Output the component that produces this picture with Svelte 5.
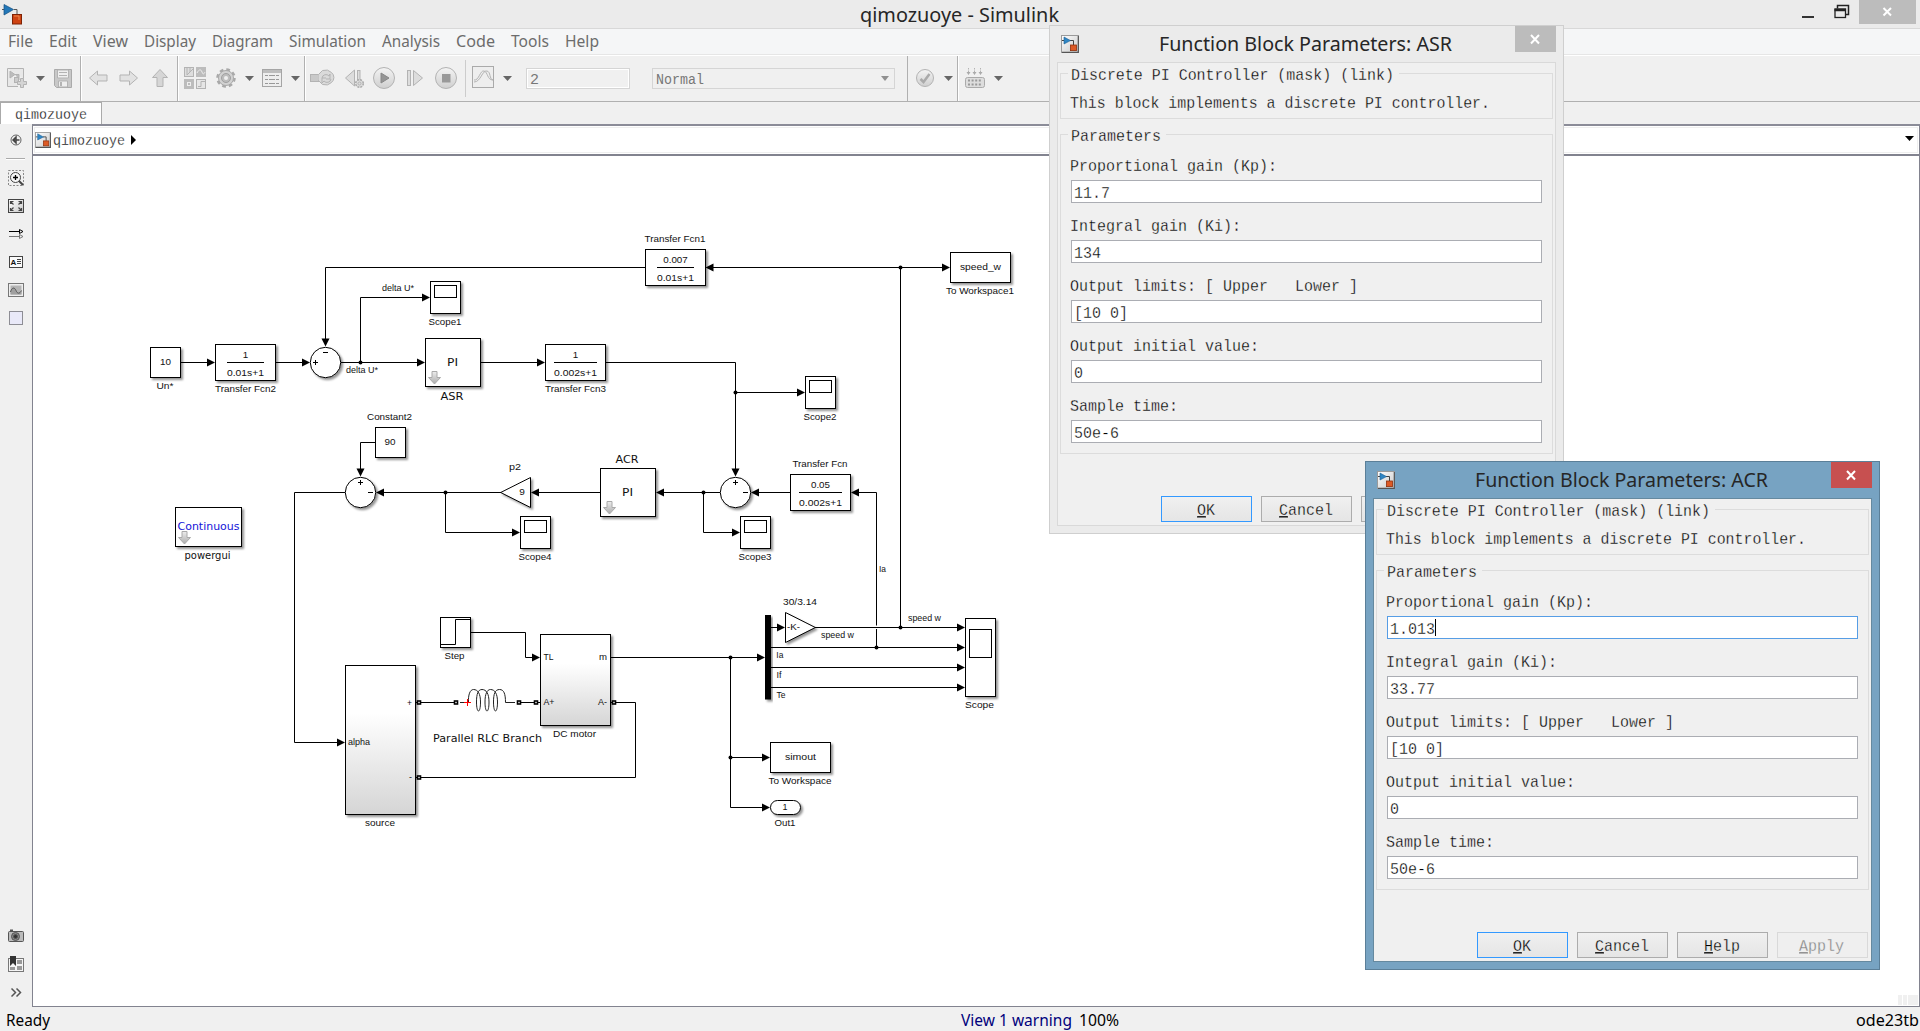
<script>
  const menus = [
    ['File', 25], ['Edit', 28], ['View', 35], ['Display', 52], ['Diagram', 61],
    ['Simulation', 77], ['Analysis', 58], ['Code', 39], ['Tools', 38], ['Help', 34],
  ];

  // `shown` is the number of button captions not covered by the window in front
  const dialogs = [
    { id: 'asr', title: 'Function Block Parameters: ASR', values: ['11.7', '134', '[10 0]', '0', '50e-6'], active: false, shown: 2 },
    { id: 'acr', title: 'Function Block Parameters: ACR', values: ['1.013', '33.77', '[10 0]', '0', '50e-6'], active: true, shown: 4 },
  ];
  const fields = [
    'Proportional gain (Kp):', 'Integral gain (Ki):', 'Output limits: [ Upper   Lower ]',
    'Output initial value:', 'Sample time:',
  ];
  const buttons = ['OK', 'Cancel', 'Help', 'Apply'];

  // Toolbar cells: kind, left edge and width in window coordinates
  const tools = [
    [['new', 0, 32], ['drop', 32, 18, 40.5], ['save', 50, 30]],
    [['left', 81, 32], ['right', 113, 32], ['up', 145, 32]],
    [['library', 178, 34], ['gear', 212, 28], ['drop', 240, 18, 249.5], ['table', 258, 28], ['drop', 286, 18, 295.5]],
    [['update', 305, 35], ['back', 340, 30], ['run', 370, 30], ['forward', 400, 30], ['stop', 430, 34], ['scope', 464, 34], ['drop', 498, 20, 507.5]],
  ];
  const toolsEnd = [
    [['check', 908, 30], ['drop', 938, 19, 948.5]],
    [['build', 958, 30], ['drop', 988, 22, 998.5]],
  ];

  const wires = [
    'M181 362.5H208', 'M276 362.5H302', 'M645 267.5H325.5V340', 'M341 362.5H418', 'M360.5 362.5V297.5H423',
    'M481 362.5H538', 'M606 362.5H735.5V470', 'M735.5 392.5H798', 'M900.5 267.5H712', 'M900.5 267.5H943',
    'M900.5 267.5V627.5', 'M790 492.5H758', 'M876.5 625.5V492.5H858', 'M876.5 629V647.5', 'M720 492.5H662',
    'M703.5 492.5V532.5H733', 'M600 492.5H538', 'M501 492.5H382', 'M445.5 492.5V532.5H513',
    'M375 442.5H360.5V470', 'M345 492.5H294.5V742.5H338', 'M471 632.5H525.5V657.5H533',
    'M611 657.5H758', 'M730.5 657.5V807.5H763', 'M730.5 757.5H763', 'M771 627.5H778', 'M815 627.5H958',
    'M771 647.5H958', 'M771 667.5H958', 'M771 687.5H958', 'M414 702.5H456', 'M518 702.5H540',
    'M609 702.5H635.5V777.5H414',
  ];
  const heads = [
    [215, 362.5, 0], [310, 362.5, 0], [325.5, 346.5, 90], [425, 362.5, 0], [430, 297.5, 0], [545, 362.5, 0],
    [735.5, 476.5, 90], [805, 392.5, 0], [705.5, 267.5, 180], [950, 267.5, 0], [751, 492.5, 180],
    [851, 492.5, 180], [656, 492.5, 180], [740, 532.5, 0], [531, 492.5, 180], [376, 492.5, 180],
    [520, 532.5, 0], [360.5, 476.5, 90], [345, 742.5, 0], [540, 657.5, 0], [765, 657.5, 0],
    [770, 757.5, 0], [770, 807.5, 0], [785, 627.5, 0], [965, 627.5, 0], [965, 647.5, 0], [965, 667.5, 0], [965, 687.5, 0],
  ];
  const dots = [[360.5, 362.5], [735.5, 392.5], [900.5, 267.5], [445.5, 492.5], [703.5, 492.5],
    [900.5, 627.5], [876.5, 647.5], [730.5, 657.5], [730.5, 757.5]];
  const boxes = [
    [150.5, 347.5, 30, 30], [215.5, 344.5, 60, 36], [425.5, 338.5, 55, 48], [545.5, 344.5, 60, 36],
    [645.5, 249.5, 60, 36], [950.5, 252.5, 60, 30], [375.5, 427.5, 30, 30], [600.5, 468.5, 55, 48],
    [790.5, 474.5, 60, 36], [175.5, 507.5, 66, 39], [440.5, 617.5, 30, 30], [770.5, 742.5, 60, 30],
  ];
  const scopes = [
    [430.5, 281.5, 32, 12, 4], [805.5, 376.5, 32, 12, 4], [520.5, 516.5, 32, 12, 4],
    [740.5, 516.5, 32, 12, 4], [965.5, 618.5, 78, 28, 11],
  ];
  const subsystems = [[345.5, 665.5, 70, 149], [540.5, 634.5, 70, 91]];
  const sums = [
    { x: 325.5, y: 362.5, signs: 'M323 352.5h5M313 362.5h5M315.5 360v5' },
    { x: 360.5, y: 492.5, signs: 'M358 482.5h5M360.5 480v5M368 492.5h5' },
    { x: 735.5, y: 492.5, signs: 'M733 482.5h5M735.5 480v5M743 492.5h5' },
  ];
  const fractions = [
    [245.5, 362.5, '1', '0.01s+1', 37], [575.5, 362.5, '1', '0.002s+1', 43],
    [675.5, 267.5, '0.007', '0.01s+1', 37], [820.5, 492.5, '0.05', '0.002s+1', 43],
  ];
  const masks = [[434.5, 371.5], [609.5, 501.5], [184.5, 531.5]];
  const ports = [[419, 702.5], [456, 702.5], [519, 702.5], [536, 702.5], [614, 702.5], [419, 777.5]];

  // Canvas captions: text, centre x, baseline, drawn width
  const captions = [
    ['10', 165.5, 365, 11], ['Un*', 165, 389, 17], ['Transfer Fcn2', 245.5, 392, 61], ['Scope1', 445, 325, 33],
    ['delta U*', 398, 291, 32], ['delta U*', 362, 373, 32], ['Transfer Fcn3', 575.5, 392, 61],
    ['Transfer Fcn1', 675, 242, 61], ['speed_w', 980.5, 270, 41], ['To Workspace1', 980, 294, 68],
    ['Scope2', 820, 420, 33], ['90', 390, 445, 11], ['Constant2', 389.5, 420, 45], ['9', 522, 495, 5.6],
    ['p2', 515, 470, 12], ['Scope4', 535, 560, 33], ['Scope3', 755, 560, 33], ['Transfer Fcn', 820, 467, 55],
    ['Ia', 882.5, 572, 7], ['30/3.14', 800, 605, 34], ['-K-', 793.5, 630, 13], ['speed w', 924.5, 621, 33],
    ['speed w', 837.5, 638, 33], ['Ia', 779.8, 658, 7], ['If', 779, 678, 5], ['Te', 781, 698, 9],
    ['Scope', 979.5, 708, 29], ['simout', 800.5, 760, 31], ['To Workspace', 800, 784, 63], ['1', 785, 810, 5],
    ['Out1', 785, 826, 21], ['Step', 454.5, 659, 20], ['TL', 548.5, 660, 10], ['m', 603, 660, 8],
    ['A+', 549, 705, 11], ['A-', 602.5, 705, 9], ['DC motor', 574.5, 737, 43], ['alpha', 359, 745, 22],
    ['+', 409.5, 706, 5], ['-', 410.5, 780, 3], ['source', 380, 826, 30],
  ];
  const wideCaptions = [
    ['PI', 452.5, 366, 11], ['ASR', 452, 400, 23], ['PI', 627.5, 496, 11], ['ACR', 627, 463, 23],
    ['powergui', 207.5, 559, 46], ['Parallel RLC Branch', 487.5, 742, 109],
  ];
</script>

{#snippet fit(text, width, kind, mnemonic = false)}
  <svg class="fit {kind}" {width} height={kind.includes('mono') ? 18 : 24}>
    <text x="0" y={kind.includes('mono') ? 14 : 18} textLength={width} lengthAdjust="spacingAndGlyphs">{#if mnemonic}<tspan class="key">{text[0]}</tspan>{text.slice(1)}{:else}{text}{/if}</text>
  </svg>
{/snippet}

{#snippet modelIcon(size)}
  <svg class="model-icon" width={size} height={size} viewBox="0 0 18 18">
    <rect x=".5" y=".5" width="17" height="17" fill="url(#paper)" stroke="#9a9a9a" />
    <path d="M17.3 1v16.3H1" fill="none" stroke="#555" stroke-width="1.2" />
    <path d="M1 5.5h2M9 5.5h3.5V10" fill="none" stroke="#444" />
    <path d="M3 2l6.5 3.6L3 9z" fill="#2f86c4" stroke="#1c5f95" stroke-width=".6" />
    <rect x="9.5" y="10" width="6" height="5.6" fill="#dd5a25" stroke="#8f2f0c" stroke-width=".8" />
  </svg>
{/snippet}

{#snippet tool([kind, x, w, cx])}
  <svg width={w} height="45" viewBox="{x} 56 {w} 45" fill="none" stroke="#b3b3b3">
    {#if kind === 'drop'}
      <path d="M{cx - 4.5} 76h9l-4.500 5z" fill="#666" stroke="none" />
    {:else if kind === 'new'}
      <path d="M7.500 68.500h16v10M18 86.500H7.500v-18" fill="#e8e8e8" />
      <path d="M10 71v7l5-3.500zM15 74.500h4V80" fill="#bdbdbd" />
      <rect x="14.500" y="77.500" width="4" height="5" fill="#ccc" />
      <path d="M20.500 78.500h3v3h3v3h-3v3h-3v-3h-3v-3h3z" fill="#d4d4d4" />
    {:else if kind === 'save'}
      <path d="M54.500 69.500h17v18h-15l-2-2z" fill="#c8c8c8" stroke="#aaa" />
      <path d="M57.500 70v8h11v-8z" fill="#eee" /><path d="M59 72.500h8M59 75.500h8" />
      <path d="M58.500 87v-6h9v6z" fill="#eee" /><path d="M61 82v4" stroke-width="2" />
    {:else if kind === 'left'}
      <path d="M89.500 78l8-7v4h9.500v6h-9.500v4z" fill="#e2e2e2" />
    {:else if kind === 'right'}
      <path d="M137.500 78l-8-7v4H120v6h9.500v4z" fill="#e2e2e2" />
    {:else if kind === 'up'}
      <path d="M160 69.500l7.500 8h-4.500v9h-6v-9h-4.500z" fill="#d6d6d6" />
    {:else if kind === 'library'}
      <rect x="184.500" y="67.500" width="9" height="9" fill="#ddd" /><path d="M187 68v7l6-6M190 68v4" />
      <rect x="196" y="67" width="10" height="10" fill="#bcbcbc" stroke="none" /><path d="M197 73c2-4 4-4 5-1s2 2 3 0" stroke="#eee" />
      <rect x="184" y="79" width="10" height="10" fill="#bcbcbc" stroke="none" /><rect x="187.500" y="82.500" width="3" height="3" stroke="#eee" />
      <rect x="196.500" y="79.500" width="9" height="9" fill="#e6e6e6" /><path d="M198 86.500h3v-5h4" />
    {:else if kind === 'gear'}
      <circle cx="226" cy="78" r="8.500" stroke-width="2.500" stroke-dasharray="3.700 2.980" stroke="#a9a9a9" />
      <circle cx="226" cy="78" r="7.500" fill="#d2d2d2" stroke="#a9a9a9" />
      <circle cx="226" cy="78" r="4.500" fill="#bdbdbd" stroke="#a0a0a0" /><circle cx="226" cy="78" r="2" fill="#efefef" stroke="none" />
    {:else if kind === 'table'}
      <rect x="262.500" y="69.500" width="19" height="17" fill="#eee" stroke="#a5a5a5" /><path d="M263 71.500h18" stroke-width="3" stroke="#bdbdbd" />
      <path d="M265 75.500h3m1 0h6m1 0h3M265 79.500h3m1 0h6m1 0h3M265 83.500h3m1 0h6m1 0h3" stroke="#999" />
    {:else if kind === 'update'}
      <rect x="310.500" y="74.500" width="8" height="7" fill="#c9c9c9" />
      <path d="M318.500 74.500l4-4a8 7 0 0 1 9 2a8 7 0 0 1 0 10a8 7 0 0 1-9 2l-4-4" fill="#dadada" />
      <path d="M322 78a4 4 0 0 1 7-2l1-2v5h-4M331 79a4 4 0 0 1-7 2l-2 2v-5h4" />
    {:else if kind === 'back'}
      <path d="M354.500 70v16l-9-8z" fill="#ddd" /><rect x="357.500" y="70.500" width="2.500" height="11" fill="#ddd" />
      <circle cx="359.500" cy="83.500" r="3.800" fill="#ddd" stroke="#aaa" stroke-width="1.500" stroke-dasharray="2 1" /><circle cx="359.500" cy="83.500" r="1.500" />
    {:else if kind === 'run'}
      <circle cx="384" cy="78" r="10.500" fill="url(#knob)" /><path d="M381 73v10l8-5z" fill="#959595" stroke="#888" />
    {:else if kind === 'forward'}
      <rect x="407.500" y="70.500" width="3" height="15" fill="#ddd" /><path d="M413.500 70.500v15l9-7.500z" fill="#ddd" />
    {:else if kind === 'stop'}
      <circle cx="446" cy="78" r="10.500" fill="url(#knob)" /><rect x="442" y="74" width="8.500" height="8.500" fill="#999" stroke="none" />
    {:else if kind === 'scope'}
      <path d="M465.500 60v37" stroke="#ccc" />
      <rect x="472.500" y="66.500" width="21" height="21" fill="#eee" stroke="#aaa" />
      <path d="M474 80c5 1 6-10 10-9s3 9 9 9M474 82c7 0 8-12 13-11c4 1 2 8 6 9" />
    {:else if kind === 'check'}
      <circle cx="925" cy="78" r="8.500" fill="url(#knob)" /><path d="M920.500 79l3 3 6-8" stroke-width="2.500" stroke="#aaa" />
    {:else if kind === 'build'}
      <path d="M968.500 68v5M974.500 68v5M980.500 68v5" stroke-dasharray="1.500 1" />
      <path d="M966.500 72h4l-2 3zM972.500 72h4l-2 3zM978.500 72h4l-2 3z" fill="#aaa" stroke="none" />
      <rect x="965.500" y="77.500" width="19" height="10" rx="2" fill="#ddd" stroke="#aaa" />
      <path d="M968 80.500h14M968 84.500h14" stroke="#999" stroke-width="2" stroke-dasharray="2 1.600" />
    {/if}
  </svg>
{/snippet}

<svg class="defs" width="0" height="0">
  <defs>
    <linearGradient id="paper" x1="0" y1="0" x2="1" y2="1"><stop offset="0" stop-color="#fff" /><stop offset="1" stop-color="#c9c9c9" /></linearGradient>
    <linearGradient id="knob" x1="0" y1="0" x2="0" y2="1"><stop offset="0" stop-color="#f4f4f4" /><stop offset="1" stop-color="#cfcfcf" /></linearGradient>
  </defs>
</svg>

<div class="window">
  <header class="titlebar">
    <svg class="logo" width="22" height="22" viewBox="0 0 22 22">
      <path d="M0 5.500h3M12 5.500h3v5" fill="none" stroke="#555" />
      <path d="M2 .5l9.500 5L2 11z" fill="#2277b8" stroke="#144f80" stroke-width=".7" />
      <rect x="10.500" y="10.500" width="9" height="9.500" fill="#cf4312" stroke="#7d2205" />
      <path d="M12 12h5v4" fill="none" stroke="#ee8a4c" />
    </svg>
    <div class="window-title">{@render fit('qimozuoye - Simulink', 199, 'title')}</div>
    <svg class="controls" width="124" height="28" viewBox="1796 0 124 28">
      <path d="M1802 17h12" stroke="#333" stroke-width="2" />
      <path d="M1837.500 8.500v-3h11v9h-3" fill="none" stroke="#222" stroke-width="1.500" />
      <rect x="1835" y="9" width="10.500" height="8.500" fill="none" stroke="#222" stroke-width="1.300" /><path d="M1834.500 10h11.500" stroke="#222" stroke-width="2.500" />
      <rect x="1859" width="57" height="24" fill="#bcbcbc" />
      <path d="M1883.500 8l7.500 7.500m0-7.500l-7.500 7.500" stroke="#fff" stroke-width="2" />
    </svg>
  </header>

  <nav class="menubar">
    {#each menus as [name, w]}<div class="menu">{@render fit(name, w, 'ui')}</div>{/each}
  </nav>

  <div class="toolbar">
    {#each tools as group, i}
      <div class="group" class:open={i === 3}>{#each group as item}{@render tool(item)}{/each}</div>
    {/each}
    <div class="stop-time">{@render fit('2', 9, 'mono-small')}</div>
    <div class="mode">
      {@render fit('Normal', 48, 'mono-small')}
      <svg width="8" height="5"><path d="M0 0h8L4 5z" fill="#909090" /></svg>
    </div>
    {#each toolsEnd as group, i}
      <div class="group" class:open={i === 1}>{#each group as item}{@render tool(item)}{/each}</div>
    {/each}
  </div>

  <div class="tabs"><div class="tab">{@render fit('qimozuoye', 72, 'mono-small')}</div></div>

  <main>
    <aside>
      <svg width="32" height="204" viewBox="0 126 32 204" fill="none" stroke="#444">
        <circle cx="16" cy="140" r="5" stroke="#666" /><path d="M13 140h6.500M16 137l-3 3 3 3z" stroke-width="1.500" />
        <path d="M6 158.500h19" stroke="#aaa" /><path d="M6 159.500h19" stroke="#fff" />
        <rect x="8.500" y="170.500" width="15" height="15" stroke="#888" stroke-dasharray="2 1.500" />
        <circle cx="15.500" cy="177.500" r="5" fill="#f6f6f6" /><path d="M19 181l4 4" stroke-width="2" /><path d="M13 177.500h5M15.500 175v5" stroke="#000" stroke-width="1.300" />
        <rect x="8.500" y="199.500" width="15" height="13" fill="url(#paper)" />
        <path d="M10.500 204v-2.500h3M11 202l2.500 2.500M21.500 204v-2.500h-3M21 202l-2.500 2.500M10.500 208v2.500h3M11 210l2.500-2.500M21.500 208v2.500h-3M21 210l-2.500-2.500" stroke-width="1.200" />
        <path d="M9 231.500h11M19.500 229.500v4l3.500-2z" stroke="#000" /><path d="M9 236.500h11M19.500 234.500v4l3.500-2z" stroke="#777" />
        <rect x="9.500" y="256.500" width="13" height="11" fill="#fbfbfb" />
        <path d="M17 259.500h4M17 261.500h4M17 263.500h4" />
        <rect x="8.500" y="283.500" width="15" height="13" fill="#eee" stroke="#777" /><rect x="10.500" y="285.500" width="11" height="9" fill="#b4b4b4" stroke="none" />
        <path d="M10.500 292c1.500-5 4-5 5.500-1.500s3.500 3.500 5.500 0V294.500h-11z" fill="#a0a0a0" stroke="none" />
        <path d="M10.500 292c1.500-5 4-5 5.500-1.500s3.500 3.500 5.500 0" stroke="#555" />
        <rect x="9.500" y="311.500" width="13" height="13" fill="#e9e9f8" stroke="#8d8d94" />
        <text x="10.500" y="265" class="note">A</text>
      </svg>
      <svg width="32" height="86" viewBox="0 920 32 86" fill="none" stroke="#555">
        <rect x="8.500" y="931.500" width="15" height="10" rx="1" fill="#bbb" /><path d="M10 930.500h3" stroke-width="2" />
        <circle cx="15.500" cy="936.500" r="4" fill="#888" /><circle cx="15.500" cy="936.500" r="2" fill="#333" />
        <rect x="8.500" y="958.500" width="15" height="13" fill="#f4f4f4" stroke="#777" />
        <path d="M10 956h6v10l-3-3-3 3z" fill="#333" stroke="none" /><path d="M17 960h5v4h-5zM17 966h5v4h-5zM10 967h5v3h-5z" fill="#999" stroke="none" />
        <path d="M11.500 988.500l4 4-4 4M16.500 988.500l4 4-4 4" stroke-width="1.500" />
      </svg>
    </aside>

    <section class="editor">
      <div class="breadcrumb">
        {@render modelIcon(16)}
        {@render fit('qimozuoye', 72, 'mono-small dark')}
        <svg width="6" height="10"><path d="M0 0l5 5-5 5z" /></svg>
        <svg class="history" width="9" height="5"><path d="M0 0h9L4.500 5z" /></svg>
      </div>

      <svg class="canvas" width="1886" height="850" viewBox="33 156 1886 850">
        <defs>
          <filter id="shade" x="-10%" y="-10%" width="130%" height="130%"><feDropShadow dx="2" dy="2" stdDeviation="1.300" flood-color="#000" flood-opacity=".42" /></filter>
          <linearGradient id="sub" x1="0" y1="0" x2="0" y2="1"><stop offset=".32" stop-color="#fff" /><stop offset="1" stop-color="#d5d5d5" /></linearGradient>
          <linearGradient id="down" x1="0" y1="0" x2="0" y2="1"><stop offset="0" stop-color="#eee" /><stop offset="1" stop-color="#aaa" /></linearGradient>
        </defs>
        <g class="wires">{#each wires as d}<path {d} />{/each}</g>
        <g class="blocks">
          {#each boxes as [x, y, w, h]}<rect {x} {y} width={w} height={h} filter="url(#shade)" />{/each}
          {#each subsystems as [x, y, w, h]}<rect class="sub" {x} {y} width={w} height={h} filter="url(#shade)" />{/each}
          {#each scopes as [x, y, h, screen, top]}
            <rect {x} {y} width="30" height={h} filter="url(#shade)" />
            <rect x={x + 4} y={y + top} width="22" height={screen} />
          {/each}
          {#each sums as s}
            <circle cx={s.x} cy={s.y} r="15.200" filter="url(#shade)" />
            <path class="thin" d={s.signs} />
          {/each}
          <path d="M500.700 492.500L530.500 477.500V507.500Z" filter="url(#shade)" />
          <path d="M815.300 627.500L785.500 612.500V642.500Z" filter="url(#shade)" />
          <rect x="770.500" y="800.500" width="30" height="14" rx="7" filter="url(#shade)" />
          <rect class="mux" x="765" y="615" width="6" height="84.500" filter="url(#shade)" />
          <path class="thin" d="M441 644.500h14.500v-25H470" />
        </g>
        {#each fractions as [x, y, top, bottom, w]}
          <path class="bar" d="M{x - w / 2} {y}h{w}" />
          <text {x} y={y - 4.500}>{top}</text>
          <text {x} y={y + 13} textLength={w} lengthAdjust="spacingAndGlyphs">{bottom}</text>
        {/each}
        {#each masks as [x, y]}<path d="M{x - 2.500} {y}h5v6h3.500l-6 6.500-6-6.500h3.500z" fill="url(#down)" stroke="#aaa" />{/each}
        {#each heads as [x, y, a]}<path d="M0 0L-8 -4V4Z" transform="translate({x} {y}) rotate({a})" />{/each}
        {#each dots as [cx, cy]}<circle {cx} {cy} r="2" />{/each}
        {#each ports as [x, y]}<rect class="port" x={x - 1.500} y={y - 1.500} width="3" height="3" />{/each}
        <path class="coil" d="M460 702.500h8.500C468 695 470 689.500 473.500 689.500C478 689.500 480.500 694 480.500 702C480.500 714 476.500 714 476.500 702C476.500 694 478 689.500 482 689.500C486.500 689.500 489 694 489 702C489 714 485 714 485 702C485 694 487 689.500 490.500 689.500C495 689.500 497.500 694 497.500 702C497.500 714 493.500 714 493.500 702C493.500 694 495 689.500 499.500 689.500C504 689.500 505.500 694 505.500 702.500H515" />
        <path d="M464 702.500h7M467.500 699v7" stroke="#f00" />
        {#each captions as [s, x, y, w]}<text {x} {y} textLength={w} lengthAdjust="spacingAndGlyphs">{s}</text>{/each}
        {#each wideCaptions as [s, x, y, w]}<text class="wide" {x} {y} textLength={w} lengthAdjust="spacingAndGlyphs">{s}</text>{/each}
        <text class="continuous" x="208.500" y="530" textLength="62" lengthAdjust="spacingAndGlyphs">Continuous</text>
        <path d="M1898 995h4v10h-4zM1903 995h4v10h-4zM1908 995h10v10h-10z" fill="#f0f0f0" />
      </svg>
    </section>
  </main>

  <footer>
    <span>{@render fit('Ready', 44, 'ui dark')}</span>
    <span class="center">{@render fit('View 1 warning', 111, 'ui navy')}{@render fit('100%', 40, 'ui dark')}</span>
    <span>{@render fit('ode23tb', 63, 'ui dark')}</span>
  </footer>
</div>

{#each dialogs as d}
  <div class="dialog {d.id}">
    <div class="caption">
      {@render modelIcon(18)}
      {@render fit(d.title, 293, 'title')}
      <div class="close"><svg width="11" height="11"><path d="M1 1l8 8.500m0-8.500l-8 8.500" stroke="#fff" stroke-width="2" /></svg></div>
    </div>
    <div class="client">
      <div class="panel about">
        <div class="legend">{@render fit('Discrete PI Controller (mask) (link)', 323, 'mono')}</div>
        <p>{@render fit('This block implements a discrete PI controller.', 420, 'mono')}</p>
      </div>
      <div class="panel params">
        <div class="legend">{@render fit('Parameters', 90, 'mono')}</div>
        {#each fields as name, i}
          <div class="field">
            {@render fit(name, name.length * 9, 'mono')}
            <div class="entry" class:focused={d.active && i === 0}>
              {@render fit(d.values[i], d.values[i].length * 9, 'mono')}
              {#if d.active && i === 0}<i class="caret"></i>{/if}
            </div>
          </div>
        {/each}
      </div>
      <div class="actions">
        {#each buttons as b, i}
          <div class="button" class:primary={b === 'OK'} class:disabled={b === 'Apply'}>
            {#if i < d.shown}{@render fit(b, b.length * 9, 'mono', true)}{/if}
          </div>
        {/each}
      </div>
    </div>
  </div>
{/each}

<style>
  :global(body) { margin: 0; overflow: hidden; }
  svg { display: block; flex: none; }
  .defs { position: absolute; }
  .fit { overflow: visible; }
  .fit text { white-space: pre; }
  .title { font: 19px "Noto Sans", sans-serif; fill: #262626; }
  .ui { font: 17px "Noto Sans", sans-serif; fill: #6c6c6c; }
  .mono { font: 17px "Liberation Mono", monospace; fill: #000; stroke: #f0f0f0; stroke-width: .3px; }
  .entry .mono { stroke: #fff; }
  .mono-small { font: 15.5px "Liberation Mono", monospace; fill: #777; }
  .dark, .tab .fit { fill: #000; }
  .breadcrumb .mono-small, .tab .mono-small { stroke: #fff; stroke-width: .3px; }
  .navy { fill: #00007c; }
  .key { text-decoration: underline; }

  .window { width: 1920px; height: 1031px; display: flex; flex-direction: column; background: #f0f0f0; }
  .titlebar { height: 28px; background: #ebebeb; border-bottom: 1px solid #d8d8d8; display: grid; grid-template-columns: 124px 1fr 124px; }
  .logo { margin: 4px 0 0 2px; }
  .window-title { display: flex; justify-content: center; padding-top: 4px; margin-right: 2px; }

  .menubar { height: 26px; display: flex; gap: 16px; padding: 0 8px; box-sizing: border-box; background: #f5f6f7; border-bottom: 1px solid #e6e6e6; }
  .toolbar { height: 47px; box-sizing: border-box; border-top: 1px solid #fff; border-bottom: 1px solid #b0b0b0; display: flex; }
  .group { display: flex; border-right: 1px solid #b0b0b0; box-shadow: 1px 0 #fff; }
  .group.open { border: 0; box-shadow: none; }
  .stop-time, .mode { box-sizing: border-box; height: 21px; margin-top: 12px; border: 1px solid #d5d5d5; display: flex; align-items: center; padding: 0 3px; }
  .stop-time { width: 104px; margin-left: 8px; box-shadow: inset 0 0 0 1px #fff; }
  .mode { width: 243px; margin-left: 22px; margin-right: 12px; justify-content: space-between; padding-right: 5px; }
  .mode + .group { border-left: 1px solid #b0b0b0; }

  .tabs { height: 22px; display: flex; align-items: stretch; background: #f0f0f0; }
  .tab { width: 102px; box-sizing: border-box; background: #fff; border: 1px solid #aaa; border-bottom: 0; padding: 2px 0 0 14px; }

  main { flex: 1; display: flex; min-height: 0; }
  aside { width: 32px; box-sizing: border-box; display: flex; flex-direction: column; justify-content: space-between; padding: 2px 0 1px; }
  .editor { flex: 1; border: 1px solid #82838f; border-top: 2px solid #8b8c98; display: flex; flex-direction: column; background: #fff; }
  .breadcrumb { height: 30px; box-sizing: border-box; border-bottom: 2px solid #82838f; box-shadow: inset 0 0 0 1px #fff, inset 0 0 0 2px #efefef; display: flex; align-items: center; gap: 3px; padding: 0 5px 0 2px; }
  .breadcrumb .mono-small { margin-left: -1px; }
  .breadcrumb .mono-small + svg { margin-left: 3px; }
  .breadcrumb .history { margin: -3px 0 0 auto; }
  .canvas { background: #fff; }
  .canvas text { font: 9.8px "Liberation Sans", sans-serif; text-anchor: middle; fill: #111; }
  .canvas text.wide { font: 10.5px "DejaVu Sans", sans-serif; }
  .canvas text.continuous { font: 10.5px "DejaVu Sans", sans-serif; fill: #1414d8; }
  .note { font: bold 8px "Liberation Sans", sans-serif; fill: #111; stroke: none; }
  .wires path, .bar { fill: none; stroke: #000; }
  .blocks rect, .blocks circle, .blocks path { fill: #fff; stroke: #000; }
  .blocks .sub { fill: url(#sub); }
  .blocks .mux { fill: #000; stroke: none; }
  .blocks .thin { fill: none; }
  .port { fill: #fff; stroke: #000; stroke-width: 1.6; }
  .coil { fill: none; stroke: #222; }

  footer { height: 24px; box-sizing: border-box; display: grid; grid-template-columns: 961px 1fr auto; padding: 1px 1px 0 0; background: #f0f0f0; }
  footer span { display: flex; gap: 7px; }
  footer span:first-child { padding-left: 6px; }

  .dialog { position: absolute; width: 515px; height: 509px; box-sizing: border-box; border: 1px solid #cfcfcf; background: #ebebeb; display: flex; flex-direction: column; padding: 0 7px 7px; }
  .asr { left: 1049px; top: 25px; }
  .acr { left: 1365px; top: 461px; background: #77a3c2; border-color: #5b7f98; }
  .caption { height: 36px; display: flex; align-items: flex-start; }
  .caption .model-icon { margin: 9px 0 0 4px; }
  .caption .title { margin: 7px 0 0 80px; }
  .close { width: 41px; height: 26px; margin-left: auto; background: #bcbcbc; display: grid; place-items: center; }
  .acr .close { background: #c75050; }
  .client { flex: 1; border: 1px solid #d9d9d9; background: #f0f0f0; padding: 0 2px; display: flex; flex-direction: column; }
  .acr .client { border-color: #65899f; }
  .panel { border: 1px solid #dcdcdc; box-sizing: border-box; }
  .about { height: 46px; margin-top: 10px; }
  .params { height: 320px; margin-top: 15px; }
  .legend { width: fit-content; margin: -8px 0 0 7px; padding: 0 5px 0 3px; background: #f0f0f0; }
  p { margin: 10px 0 0 9px; }
  .field { margin: 14px 0 0 9px; }
  .legend + .field { margin-top: 12px; }
  .entry { width: 471px; height: 23px; box-sizing: border-box; margin: 5px 0 0 1px; border: 1px solid #abadb3; background: #fff; display: flex; padding: 3px 0 0 2px; }
  .focused { border-color: #569de5; }
  .caret { width: 1px; height: 17px; background: #000; margin-top: -1px; }
  .actions { display: flex; justify-content: flex-end; gap: 9px; margin-top: 42px; padding-right: 1px; }
  .button { width: 91px; height: 26px; box-sizing: border-box; border: 1px solid #acacac; background: linear-gradient(#f0f0f0, #e5e5e5); display: flex; justify-content: center; padding: 4px 2px 0 0; }
  .primary { border-color: #3399ff; }
  .disabled { border-color: #d9d9d9; background: #efefef; }
  .disabled .fit { fill: #838383; }
</style>
